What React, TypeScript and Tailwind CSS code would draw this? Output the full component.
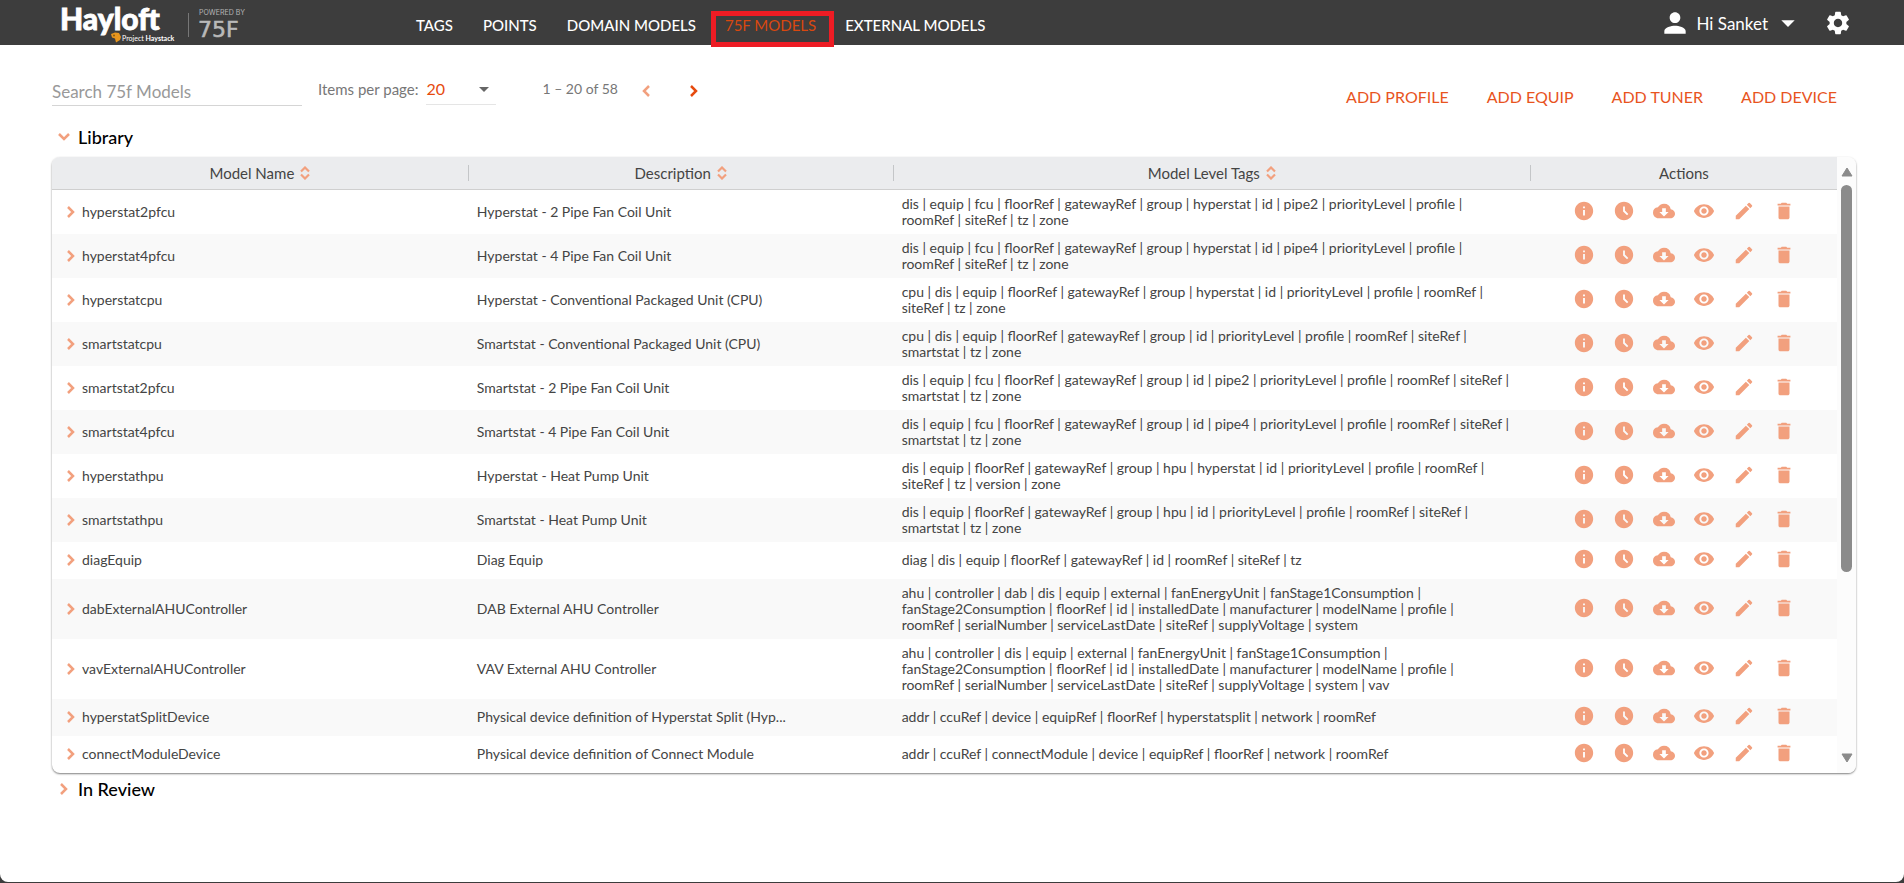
import { useState } from "react"
import {
  MdAccessTimeFilled,
  MdArrowDropDown,
  MdCloudDownload,
  MdDelete,
  MdEdit,
  MdInfo,
  MdPerson,
  MdRemoveRedEye,
  MdSettings,
} from "react-icons/md"

type Model = { name: string; description: string; tags: string }

const models: Model[] = [
  { name: "hyperstat2pfcu", description: "Hyperstat - 2 Pipe Fan Coil Unit", tags: "dis | equip | fcu | floorRef | gatewayRef | group | hyperstat | id | pipe2 | priorityLevel | profile | roomRef | siteRef | tz | zone" },
  { name: "hyperstat4pfcu", description: "Hyperstat - 4 Pipe Fan Coil Unit", tags: "dis | equip | fcu | floorRef | gatewayRef | group | hyperstat | id | pipe4 | priorityLevel | profile | roomRef | siteRef | tz | zone" },
  { name: "hyperstatcpu", description: "Hyperstat - Conventional Packaged Unit (CPU)", tags: "cpu | dis | equip | floorRef | gatewayRef | group | hyperstat | id | priorityLevel | profile | roomRef | siteRef | tz | zone" },
  { name: "smartstatcpu", description: "Smartstat - Conventional Packaged Unit (CPU)", tags: "cpu | dis | equip | floorRef | gatewayRef | group | id | priorityLevel | profile | roomRef | siteRef | smartstat | tz | zone" },
  { name: "smartstat2pfcu", description: "Smartstat - 2 Pipe Fan Coil Unit", tags: "dis | equip | fcu | floorRef | gatewayRef | group | id | pipe2 | priorityLevel | profile | roomRef | siteRef | smartstat | tz | zone" },
  { name: "smartstat4pfcu", description: "Smartstat - 4 Pipe Fan Coil Unit", tags: "dis | equip | fcu | floorRef | gatewayRef | group | id | pipe4 | priorityLevel | profile | roomRef | siteRef | smartstat | tz | zone" },
  { name: "hyperstathpu", description: "Hyperstat - Heat Pump Unit", tags: "dis | equip | floorRef | gatewayRef | group | hpu | hyperstat | id | priorityLevel | profile | roomRef | siteRef | tz | version | zone" },
  { name: "smartstathpu", description: "Smartstat - Heat Pump Unit", tags: "dis | equip | floorRef | gatewayRef | group | hpu | id | priorityLevel | profile | roomRef | siteRef | smartstat | tz | zone" },
  { name: "diagEquip", description: "Diag Equip", tags: "diag | dis | equip | floorRef | gatewayRef | id | roomRef | siteRef | tz" },
  { name: "dabExternalAHUController", description: "DAB External AHU Controller", tags: "ahu | controller | dab | dis | equip | external | fanEnergyUnit | fanStage1Consumption | fanStage2Consumption | floorRef | id | installedDate | manufacturer | modelName | profile | roomRef | serialNumber | serviceLastDate | siteRef | supplyVoltage | system" },
  { name: "vavExternalAHUController", description: "VAV External AHU Controller", tags: "ahu | controller | dis | equip | external | fanEnergyUnit | fanStage1Consumption | fanStage2Consumption | floorRef | id | installedDate | manufacturer | modelName | profile | roomRef | serialNumber | serviceLastDate | siteRef | supplyVoltage | system | vav" },
  { name: "hyperstatSplitDevice", description: "Physical device definition of Hyperstat Split (Hyp...", tags: "addr | ccuRef | device | equipRef | floorRef | hyperstatsplit | network | roomRef" },
  { name: "connectModuleDevice", description: "Physical device definition of Connect Module", tags: "addr | ccuRef | connectModule | device | equipRef | floorRef | network | roomRef" },
]

const navLinks = ["TAGS", "POINTS", "DOMAIN MODELS", "75F MODELS", "EXTERNAL MODELS"]

const rowActions = [
  { label: "Info", Icon: MdInfo },
  { label: "History", Icon: MdAccessTimeFilled },
  { label: "Download", Icon: MdCloudDownload },
  { label: "View", Icon: MdRemoveRedEye },
  { label: "Edit", Icon: MdEdit },
  { label: "Delete", Icon: MdDelete },
]

function Logo() {
  return (
    <svg width="190" height="44" viewBox="0 0 190 44" role="img" aria-label="Hayloft">
      <text x="0" y="29" fill="#fff" stroke="#fff" strokeWidth="0.8" fontSize="30" fontWeight="900" fontFamily="Lato, sans-serif">
        Hayloft
      </text>
      <path d="M51 33l4-1.500 4 .5 2 4-1 3-4 2.500-1-4-3-1z" fill="#e8961e" />
      <circle cx="54" cy="34.500" r="1" fill="#8a5a12" />
      <text x="62" y="40" fill="#fff" fontSize="7" fontFamily="Lato, sans-serif">
        Project <tspan fontWeight="700">Haystack</tspan>
      </text>
      <path d="M128.500 12v24" stroke="#777" />
      <text x="139" y="14" fill="#b5b5b5" fontSize="7" fontFamily="Inter, sans-serif">POWERED BY</text>
      <text x="138" y="36" fill="#b9b9b9" stroke="#b9b9b9" strokeWidth="0.6" fontSize="22" fontFamily="'DejaVu Sans', sans-serif">75F</text>
    </svg>
  )
}

function Chevron({ className = "" }: { className?: string }) {
  return (
    <svg className={className} viewBox="0 0 22 24" fill="none" stroke="currentColor" strokeWidth={2.5}>
      <path d="M8 7l5 5-5 5" />
    </svg>
  )
}

function SortHeader({ label }: { label: string }) {
  return (
    <button className="inline-flex items-center gap-1.5">
      {label}
      <svg className="w-2.5 h-[14px] text-[#f2a07e]" viewBox="0 0 10 14" fill="none" stroke="currentColor" strokeWidth={2.2}>
        <path d="M1 5.500l4-4 4 4M1 8.500l4 4 4-4" />
      </svg>
    </button>
  )
}

export default function App() {
  const [pageSize, setPageSize] = useState("20")
  const [search, setSearch] = useState("")

  return (
    <div className="min-h-screen flex flex-col pb-px bg-[#3c3c3c] font-['Lato',sans-serif] text-[#444]">
      <header className="bg-[#3d3d3d] h-[45px] flex items-center pl-15 pr-13 text-white">
        <a href="#" className="shrink-0"><Logo /></a>
        <nav className="flex items-center h-full ml-[151px] text-[15px]/6 font-medium">
          {navLinks.map((link) =>
            link === "75F MODELS" ? (
              <a key={link} href="#" className="relative px-[14px] pt-1 font-normal text-[#d9480f]">
                {link}
                <span className="absolute top-0.5 left-0 -right-1 h-9 border-5 border-[#ed1c24]" />
              </a>
            ) : (
              <a key={link} href="#" className="px-[15px] pt-1">{link}</a>
            )
          )}
        </nav>
        <div className="ml-auto flex items-center">
          <button className="flex items-center text-[17px]">
            <MdPerson className="w-8 h-8 mr-1.5" />
            <span className="pt-0.5">Hi Sanket</span>
            <MdArrowDropDown className="w-8 h-8 ml-1" />
          </button>
          <button aria-label="Settings" className="ml-5"><MdSettings className="w-7 h-7" /></button>
        </div>
      </header>

      <main className="flex-1 bg-white rounded-b-lg pl-13 pr-12">
        <div className="flex items-start pt-8">
          <input
            aria-label="Search 75f Models"
            placeholder="Search 75f Models"
            value={search}
            onChange={(e) => setSearch(e.target.value)}
            className="w-[250px] h-7 mt-px border-b border-[#d5d5d5] text-[17px] placeholder:text-[#999] outline-none"
          />
          <label htmlFor="page-size" className="ml-4 text-[15px]/6 text-[#777]">Items per page:</label>
          <div className="relative ml-2">
            <select
              id="page-size"
              value={pageSize}
              onChange={(e) => setPageSize(e.target.value)}
              className="appearance-none w-[70px] h-7 pb-1 border-b border-[#e5e5e5] text-[#e64a0e] outline-none"
            >
              <option>20</option>
              <option>50</option>
            </select>
            <MdArrowDropDown className="absolute right-0 top-0 w-6 h-6 text-[#666] pointer-events-none" />
          </div>
          <span className="ml-[46px] text-sm/6 text-[#777]">1 – 20 of 58</span>
          <button aria-label="Previous page" className="ml-4 mt-0.5 text-[#f2a07e]"><Chevron className="w-6 h-6 rotate-180" /></button>
          <button aria-label="Next page" className="ml-6 mt-0.5 text-[#e64a0e]"><Chevron className="w-6 h-6" /></button>
          <div className="ml-auto mr-[19px] mt-2 flex gap-[38px] text-[#e8541e]">
            <button>ADD PROFILE</button>
            <button>ADD EQUIP</button>
            <button>ADD TUNER</button>
            <button>ADD DEVICE</button>
          </div>
        </div>

        <button className="flex items-center mt-[14px] text-lg font-medium text-black">
          <Chevron className="w-6 h-6 mr-0.5 rotate-90 text-[#f2a07e]" />
          Library
        </button>

        <section className="flex mt-1.5 rounded-lg overflow-hidden shadow-[0_1px_2px_rgba(0,0,0,0.5)]">
          <table className="flex-1 table-fixed border-collapse text-sm/4">
            <colgroup>
              <col className="w-[23.350%]" />
              <col className="w-[23.800%]" />
              <col className="w-[35.700%]" />
              <col />
            </colgroup>
            <thead>
              <tr className="h-8 bg-[#ebecee] border-b border-[#cfcfcf] text-[15px]">
                {["Model Name", "Description", "Model Level Tags"].map((label) => (
                  <th key={label} className="font-normal p-0">
                    <div className="border-r border-[#c4c6c8] flex justify-center"><SortHeader label={label} /></div>
                  </th>
                ))}
                <th className="font-normal p-0">Actions</th>
              </tr>
            </thead>
            <tbody>
              {models.map((model) => (
                <tr key={model.name} className="h-[37px] even:bg-[#f9f9f9]">
                  <td className="pl-2">
                    <button className="flex items-center">
                      <Chevron className="w-[22px] h-6 text-[#f2a07e]" />
                      {model.name}
                    </button>
                  </td>
                  <td className="px-2">{model.description}</td>
                  {/* keep each separator on the line of the tag before it */}
                  <td className="pl-2 pr-[18px] py-[6px]">{model.tags.replaceAll(" |", "\u00a0|")}</td>
                  <td className="pb-0.5">
                    <div className="flex justify-center gap-[18px]">
                      {rowActions.map(({ label, Icon }) => (
                        <button key={label} aria-label={label} className="text-[#f2a07e]"><Icon className="w-[22px] h-[22px]" /></button>
                      ))}
                    </div>
                  </td>
                </tr>
              ))}
            </tbody>
          </table>
          {/* Scrollbar */}
          <div className="w-[19px] bg-[#fcfcfc] flex flex-col items-center pt-2.5 pb-2.5 text-[#8b8b8b]">
            <svg className="w-3 h-2.5 shrink-0" viewBox="0 0 12 10" fill="currentColor" stroke="currentColor" strokeLinejoin="round">
              <path d="M6 1l5 8H1z" />
            </svg>
            <div className="w-[11px] h-[65%] mt-2 rounded-full bg-[#8b8b8b]" />
            <svg className="w-3 h-2.5 shrink-0 mt-auto" viewBox="0 0 12 10" fill="currentColor" stroke="currentColor" strokeLinejoin="round">
              <path d="M6 9L1 1h10z" />
            </svg>
          </div>
        </section>

        <button className="flex items-center mt-0.5 text-lg font-medium text-black">
          <Chevron className="w-6 h-6 mr-0.5 text-[#f2a07e]" />
          In Review
        </button>
      </main>
    </div>
  )
}
